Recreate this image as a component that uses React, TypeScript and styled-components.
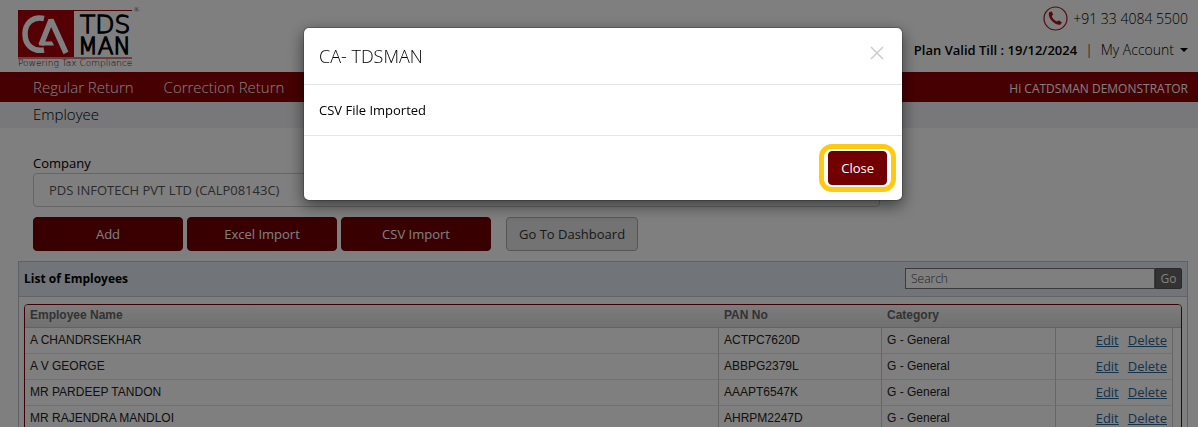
import React from "react";
import styled, { createGlobalStyle } from "styled-components";

const sans = `"Open Sans", "Noto Sans", sans-serif`;
const arial = `"Liberation Sans", Arial, sans-serif`;

const GlobalStyle = createGlobalStyle`
  *, *::before, *::after { box-sizing: border-box; }
  body {
    margin: 0;
    overflow: hidden;
    background: #fff;
    color: #000;
    font: 400 13px/20px ${sans};
  }
  button, input, select { font: inherit; margin: 0; }
`;

const Header = styled.header`
  display: flex;
  justify-content: space-between;
  height: 72px;
  padding: 6px 10px 0 18px;
  font-size: 14px;
  font-weight: 300;
`;

const HeaderRight = styled.div`
  display: flex;
  flex-direction: column;
  align-items: flex-end;
  gap: 7px;
`;

const Phone = styled.div`
  display: flex;
  align-items: center;
  gap: 5px;
  height: 25px;
  svg { display: block; }
`;

const AccountBar = styled.div`
  display: flex;
  align-items: center;
  gap: 8px;
  height: 24px;
`;

const Plan = styled.span`
  font-size: 13px;
  font-weight: 600;
`;

const AccountButton = styled.button`
  display: flex;
  align-items: center;
  gap: 6px;
  padding: 0;
  border: 0;
  background: none;
  color: #000;
  &::after {
    content: "";
    border: 4px solid transparent;
    border-top-color: #000;
    border-bottom: 0;
  }
`;

const Nav = styled.nav`
  display: flex;
  align-items: center;
  gap: 30px;
  height: 30px;
  padding: 0 10px 0 33px;
  background: #8e0004;
  color: #fff;
`;

const NavLink = styled.a`
  color: #fff;
  font-size: 15px;
  font-weight: 300;
  text-decoration: none;
`;

const Greeting = styled.span`
  margin-left: auto;
  padding-top: 4px;
  font-size: 12px;
`;

const Crumb = styled.h1`
  margin: 0;
  padding: 0 33px;
  height: 26px;
  background: #f0f0f5;
  font-size: 15px;
  font-weight: 300;
  line-height: 25px;
`;

const Form = styled.form`
  padding: 25px 10px 10px 33px;
`;

const FieldRow = styled.div`
  display: grid;
  grid-template-columns: 11fr 4fr;
`;

const Label = styled.label`
  display: block;
`;

const Select = styled.select`
  appearance: none;
  display: block;
  width: 100%;
  height: 34px;
  padding: 0 15px;
  border: 1px solid #ccc;
  border-radius: 4px;
  background: #fff;
  color: #555;
`;

const Actions = styled.div`
  display: flex;
  gap: 4px;
  margin-top: 10px;
`;

const Button = styled.button<{ $plain?: boolean; $wide?: boolean }>`
  height: 34px;
  width: ${(p) => (p.$wide ? "150px" : "auto")};
  padding: 0 12px;
  margin-left: ${(p) => (p.$plain ? "11px" : "0")};
  border: 1px solid ${(p) => (p.$plain ? "#adadad" : "#6e0003")};
  border-radius: 4px;
  background: ${(p) => (p.$plain ? "#e6e6e6" : "#720003")};
  color: ${(p) => (p.$plain ? "#333" : "#fff")};
  white-space: nowrap;
`;

const Panel = styled.section`
  margin: 0 10px 0 18px;
  border: 1px solid #bcc3cc;
`;

const PanelHead = styled.div`
  display: flex;
  align-items: center;
  justify-content: space-between;
  height: 35px;
  padding: 0 5px 1px;
  border-bottom: 1px solid #c3c7cd;
  background: #e2e8f2;
`;

const PanelTitle = styled.h2`
  margin: 0;
  font-size: 12px;
  font-weight: 700;
`;

const Search = styled.form`
  display: flex;
  height: 21px;
`;

const SearchInput = styled.input`
  width: 250px;
  padding: 0 5px;
  border: 1px solid #777;
  background: #fff;
  font-size: 12px;
  font-weight: 300;
  &::placeholder { color: #444; opacity: 1; }
`;

const GoButton = styled.button`
  width: 27px;
  padding: 0;
  border: 1px solid #555;
  border-radius: 0 2px 2px 0;
  background: #666;
  color: #fff;
  font-size: 12px;
  line-height: 18px;
`;

const Grid = styled.div`
  margin: 7px 5px;
  border: 1px solid #7a0010;
  border-radius: 4px;
  overflow: hidden;
`;

const Table = styled.table`
  width: 100%;
  table-layout: fixed;
  border-collapse: separate;
  border-spacing: 0;
  font: 12px/16px ${arial};
  color: #222;
`;

const Th = styled.th<{ $w?: number }>`
  width: ${(p) => (p.$w ? `${p.$w}px` : "auto")};
  height: 23px;
  padding: 0 5px 2px;
  border-bottom: 1px solid #c4c4c4;
  background: linear-gradient(#fbf8f8, #e2e2e2);
  color: #666;
  text-align: left;
  &:last-child { padding: 0; }
`;

const Td = styled.td<{ $end?: boolean }>`
  height: 26px;
  padding: 0 5px 2px;
  border-right: 1px solid #ccc;
  border-bottom: 1px solid #e2e2e2;
  text-align: ${(p) => (p.$end ? "right" : "left")};
  &:last-child { padding: 0; border: 0; }
`;

const RowLink = styled.a`
  margin-left: 9px;
  color: #2a6496;
  font: 400 13px/20px ${sans};
  text-decoration: underline;
`;

const Backdrop = styled.div`
  position: fixed;
  inset: 0;
  padding: 27px 0 0 8px;
  background: rgba(0, 0, 0, 0.5);
`;

const Dialog = styled.div`
  width: 600px;
  max-width: 100%;
  margin: 0 auto;
  border: 1px solid rgba(0, 0, 0, 0.2);
  border-radius: 6px;
  background: #fff;
  background-clip: padding-box;
  box-shadow: 0 5px 15px rgba(0, 0, 0, 0.5);
`;

const DialogHead = styled.div`
  display: flex;
  align-items: flex-start;
  justify-content: space-between;
  padding: 15px;
  border-bottom: 1px solid #e5e5e5;
`;

const DialogTitle = styled.h2`
  margin: 0;
  font-size: 18px;
  font-weight: 300;
  line-height: 26px;
`;

const DismissButton = styled.button`
  display: flex;
  padding: 2px;
  border: 0;
  background: none;
`;

const DialogBody = styled.div`
  padding: 15px;
`;

const DialogFoot = styled.div`
  display: flex;
  justify-content: flex-end;
  padding: 15px;
  border-top: 1px solid #e5e5e5;
`;

const Highlight = styled.div`
  position: relative;
  &::after {
    content: "";
    position: absolute;
    inset: -7px -9px;
    border: 5px solid #fdc913;
    border-radius: 13px;
    pointer-events: none;
  }
`;

const Logo = () => (
  <svg width="124" height="62" viewBox="0 0 124 62" role="img" aria-label="CA TDS MAN">
    <rect x="0" y="4" width="56" height="47" fill="#a8000a" />
    <path d="M56 4.500H114M0 52H114" stroke="#a8000a" strokeWidth="1" fill="none" />
    <path
      d="M26 12.500 C14 10 7 18 7 28 C7 39 15 46 26 44"
      stroke="#fff"
      strokeWidth="5.500"
      fill="none"
    />
    <path d="M23 39 L33 14 L48 47" stroke="#fff" strokeWidth="5.500" strokeLinejoin="bevel" fill="none" />
    <path d="M22 35.500H34L36 39.500H21Z" fill="#fff" />
    <g fill="#000" stroke="#000" fontFamily="DejaVu Sans, sans-serif">
      <text x="62" y="27" fontSize="25" strokeWidth="1.300">TDS</text>
      <text x="60" y="48" fontSize="23" strokeWidth="1.300">MAN</text>
    </g>
    <g fill="#111" fontFamily="DejaVu Sans, sans-serif">
      <text x="0" y="60" fontSize="9">Powering Tax Compliance</text>
      <text x="115" y="6" fontSize="7">®</text>
    </g>
  </svg>
);

const PhoneIcon = () => (
  <svg width="25" height="25" viewBox="0 0 25 25" aria-hidden="true">
    <circle cx="12.500" cy="12.500" r="11.500" fill="none" stroke="#a8141c" strokeWidth="1.200" />
    <path
      d="M6 6.400 L8.600 5.300 L10.200 8.600 L8.700 9.900 C9.700 12.600 11.700 14.600 14.200 15.600 L15.500 14.200 L18.900 16.200 L17.600 18.600 C15 19.600 11.500 17.600 9 15 C6.600 12.400 5.200 9 6 6.400Z"
      fill="#a8141c"
    />
  </svg>
);

const employees = [
  { name: "A CHANDRSEKHAR", pan: "ACTPC7620D" },
  { name: "A V GEORGE", pan: "ABBPG2379L" },
  { name: "MR PARDEEP TANDON", pan: "AAAPT6547K" },
  { name: "MR RAJENDRA MANDLOI", pan: "AHRPM2247D" },
];

export default function App() {
  return (
    <>
      <GlobalStyle />
      <Header>
        <Logo />
        <HeaderRight>
          <Phone>
            <PhoneIcon />
            +91 33 4084 5500
          </Phone>
          <AccountBar>
            <Plan>Plan Valid Till : 19/12/2024</Plan>
            <span>|</span>
            <AccountButton type="button">My Account</AccountButton>
          </AccountBar>
        </HeaderRight>
      </Header>
      <Nav>
        <NavLink href="#regular">Regular Return</NavLink>
        <NavLink href="#correction">Correction Return</NavLink>
        <Greeting>Hi CATDSMAN DEMONSTRATOR</Greeting>
      </Nav>
      <Crumb>Employee</Crumb>
      <main>
        <Form>
          <FieldRow>
            <div>
              <Label htmlFor="company">Company</Label>
              <Select id="company">
                <option>PDS INFOTECH PVT LTD (CALP08143C)</option>
              </Select>
            </div>
          </FieldRow>
          <Actions>
            <Button type="button" $wide>Add</Button>
            <Button type="button" $wide>Excel Import</Button>
            <Button type="button" $wide>CSV Import</Button>
            <Button type="button" $plain>Go To Dashboard</Button>
          </Actions>
        </Form>
        <Panel>
          <PanelHead>
            <PanelTitle>List of Employees</PanelTitle>
            <Search role="search">
              <SearchInput type="text" placeholder="Search" aria-label="Search" />
              <GoButton type="button">Go</GoButton>
            </Search>
          </PanelHead>
          <Grid>
            <Table>
              <thead>
                <tr>
                  <Th>Employee Name</Th>
                  <Th $w={163}>PAN No</Th>
                  <Th $w={174}>Category</Th>
                  <Th $w={117} />
                  <Th as="td" $w={8} />
                </tr>
              </thead>
              <tbody>
                {employees.map((e) => (
                  <tr key={e.pan}>
                    <Td>{e.name}</Td>
                    <Td>{e.pan}</Td>
                    <Td>G - General</Td>
                    <Td $end>
                      <RowLink href="#edit">Edit</RowLink>
                      <RowLink href="#delete">Delete</RowLink>
                    </Td>
                    <Td />
                  </tr>
                ))}
              </tbody>
            </Table>
          </Grid>
        </Panel>
      </main>
      <Backdrop>
        <Dialog role="dialog" aria-modal="true" aria-labelledby="dialog-title">
          <DialogHead>
            <DialogTitle id="dialog-title">CA- TDSMAN</DialogTitle>
            <DismissButton type="button" aria-label="Dismiss">
              <svg width="16" height="16" viewBox="0 0 16 16" aria-hidden="true">
                <path d="M2 2L14 14M14 2L2 14" stroke="#ccc" strokeWidth="1.500" />
              </svg>
            </DismissButton>
          </DialogHead>
          <DialogBody>CSV File Imported</DialogBody>
          <DialogFoot>
            <Highlight>
              <Button type="button">Close</Button>
            </Highlight>
          </DialogFoot>
        </Dialog>
      </Backdrop>
    </>
  );
}
